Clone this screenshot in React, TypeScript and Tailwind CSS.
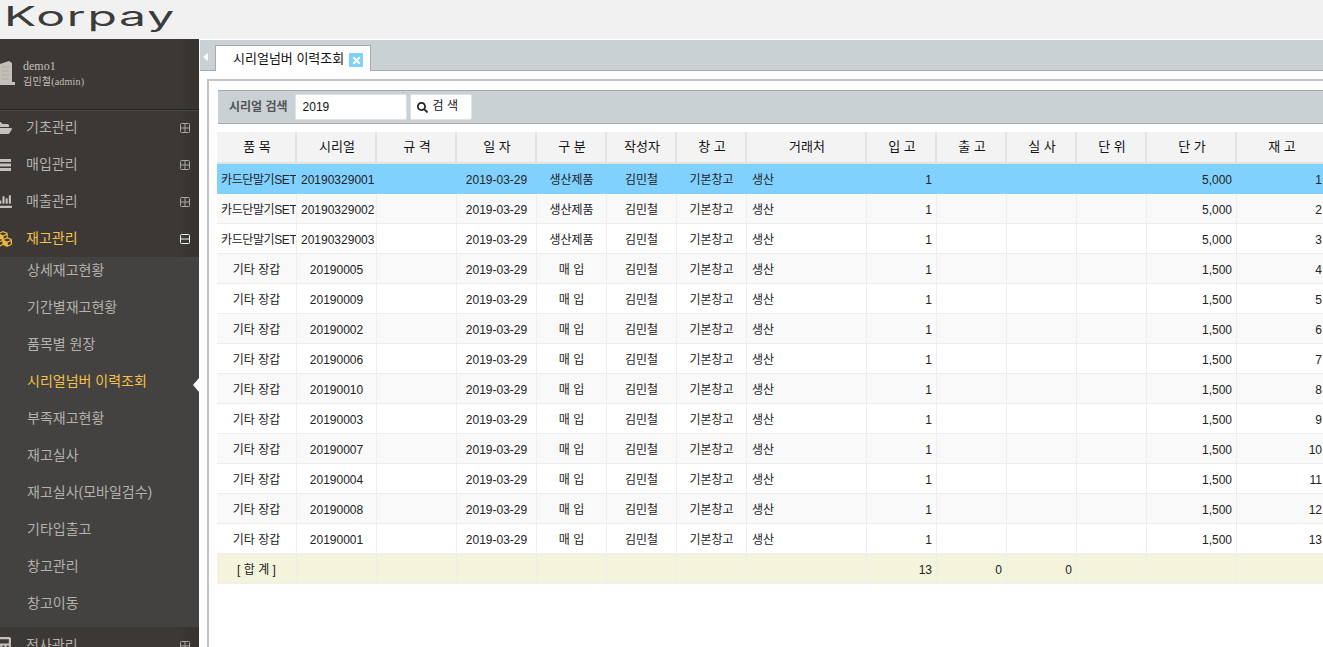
import { FaCalculator, FaChartBar, FaCubes, FaFolderOpen, FaSearch, FaTimes } from "react-icons/fa";
import { ReactNode } from "react";

const fontStack = "font-['Liberation_Sans','Noto_Sans_CJK_KR',sans-serif]";

const columns = [80, 80, 80, 80, 70, 70, 70, 120, 70, 70, 70, 70, 90, 90];
const headers = ["품 목", "시리얼", "규 격", "일 자", "구 분", "작성자", "창 고", "거래처", "입 고", "출 고", "실 사", "단 위", "단 가", "재 고"];

type Row = { name: string; serial: string; kind: string; price: string };

const rows: Row[] = [
  { name: "카드단말기SET", serial: "20190329001", kind: "생산제품", price: "5,000" },
  { name: "카드단말기SET", serial: "20190329002", kind: "생산제품", price: "5,000" },
  { name: "카드단말기SET", serial: "20190329003", kind: "생산제품", price: "5,000" },
  { name: "기타 장갑", serial: "20190005", kind: "매 입", price: "1,500" },
  { name: "기타 장갑", serial: "20190009", kind: "매 입", price: "1,500" },
  { name: "기타 장갑", serial: "20190002", kind: "매 입", price: "1,500" },
  { name: "기타 장갑", serial: "20190006", kind: "매 입", price: "1,500" },
  { name: "기타 장갑", serial: "20190010", kind: "매 입", price: "1,500" },
  { name: "기타 장갑", serial: "20190003", kind: "매 입", price: "1,500" },
  { name: "기타 장갑", serial: "20190007", kind: "매 입", price: "1,500" },
  { name: "기타 장갑", serial: "20190004", kind: "매 입", price: "1,500" },
  { name: "기타 장갑", serial: "20190008", kind: "매 입", price: "1,500" },
  { name: "기타 장갑", serial: "20190001", kind: "매 입", price: "1,500" },
];

const subMenus = ["상세재고현황", "기간별재고현황", "품목별 원장", "시리얼넘버 이력조회", "부족재고현황", "재고실사", "재고실사(모바일검수)", "기타입출고", "창고관리", "창고이동"];

const ListIcon = () => (
  <svg width="16" height="14" viewBox="0 0 16 14" fill="#c4c0bb">
    <rect x="0" y="1" width="16" height="3" />
    <rect x="4" y="5.5" width="12" height="3" />
    <rect x="0" y="10" width="16" height="3" />
  </svg>
);

const BuildingIcon = () => (
  <svg width="15" height="24" viewBox="0 0 15 24" fill="#c4c0b9" className="shrink-0">
    <path d="M0 3L9 0L12 2V21H15V24H0Z" />
    <path d="M2 6H9M2 10H9M2 14H9M2 18H9" stroke="#a5a19b" strokeWidth="0.7" />
  </svg>
);

const ToggleIcon = ({ open }: { open?: boolean }) => (
  <svg width="10" height="10" viewBox="0 0 10 10" fill="none" stroke={open ? "#f0f0f0" : "#a9a6a2"} strokeWidth="1">
    <rect x="0.5" y="0.5" width="9" height="9" rx="1" />
    <path d="M1 5h8" />
    {!open && <path d="M5 1v8" />}
  </svg>
);

const MenuItem = ({ icon, label, active }: { icon: ReactNode; label: string; active?: boolean }) => (
  <div className="h-[37px] flex items-center bg-gradient-to-r from-[#3b3836] from-90% to-[#35322f] shrink-0">
    <div className="w-[26px] -ml-[10px] mr-[10px] flex justify-center">{icon}</div>
    <span className={`text-[14px] ${active ? "text-[#f7c04a]" : "text-[#b4b1ac]"}`}>{label}</span>
    <div className="ml-auto mr-[9px] flex">
      <ToggleIcon open={active} />
    </div>
  </div>
);

const Sidebar = () => (
  <aside className="w-[199px] shrink-0 flex flex-col bg-[#3b3836] overflow-hidden">
    <div className="h-[69px] shrink-0 flex items-center gap-[8px] bg-gradient-to-r from-[#3b3836] from-90% to-[#35322f] pb-[1px]">
      <BuildingIcon />
      <div className="leading-none">
        <div className="font-['Liberation_Serif','Noto_Sans_CJK_KR',serif] text-[12px] text-[#c4c0b9] mb-[5px]">demo1</div>
        <div className="font-['Liberation_Serif','Noto_Sans_CJK_KR',serif] text-[10px] tracking-[0.2px] text-[#c4c0b9]">김민철(admin)</div>
      </div>
    </div>
    <div className="h-[1px] bg-[#242220] shrink-0 translate-y-[1px] shadow-[0_1px_0_#4a4744]" />
    <MenuItem icon={<FaFolderOpen className="text-[#c4c0bb] text-[18px]" />} label="기초관리" />
    <MenuItem icon={<ListIcon />} label="매입관리" />
    <MenuItem icon={<FaChartBar className="text-[#c4c0bb] text-[17px]" />} label="매출관리" />
    <MenuItem icon={<FaCubes className="text-[#eeb73e] text-[18px]" />} label="재고관리" active />
    <div className="bg-[#434240] shrink-0">
      {subMenus.map((menu) => {
        const current = menu === "시리얼넘버 이력조회";
        return (
          <div key={menu} className="relative h-[37px] pl-[27px] pt-[3px] text-[14px] leading-[20px]">
            <span className={current ? "text-[#f7c04a]" : "text-[#b4b1ac]"}>{menu}</span>
            {current && (
              <div className="absolute right-0 top-[10px] w-0 h-0 border-y-[7px] border-y-transparent border-r-[6px] border-r-white" />
            )}
          </div>
        );
      })}
    </div>
    <MenuItem icon={<FaCalculator className="text-[#c4c0bb] text-[17px]" />} label="전사관리" />
  </aside>
);

const Cell = ({ children, align = "center" }: { children?: ReactNode; align?: "center" | "left" | "right" }) => {
  const alignClass = align === "left" ? "text-left pl-[5px]" : align === "right" ? "text-right pr-[4px]" : "text-center px-[4px]";
  return <td className={`h-[30px] p-0 pt-[2px] border-r border-b border-[#eeeeee] whitespace-nowrap overflow-hidden ${alignClass}`}>{children}</td>;
};

const HistoryTable = () => (
  <table className="table-fixed border-separate border-spacing-0 w-[1110px] text-[12px] text-[#222]">
    <colgroup>
      {columns.map((width, index) => (
        <col key={index} style={{ width }} />
      ))}
    </colgroup>
    <thead>
      <tr className="bg-[#f3f3f3] text-[#111]">
        {headers.map((header) => (
          <th key={header} className="h-[32px] p-0 pl-[2px] text-[13px] font-normal border-r-2 border-r-[#e3e3e3] border-b-[2px] border-b-[#e3e3e3]">
            {header}
          </th>
        ))}
      </tr>
    </thead>
    <tbody>
      {rows.map((row, index) => (
        <tr key={row.serial} className={index === 0 ? "bg-[#81d1ff] [&>td]:border-[#81d1ff]" : index % 2 === 1 ? "bg-[#f9f9f9]" : "bg-white"}>
          <Cell>
            <span className={row.name.length > 6 ? "tracking-[-0.4px]" : ""}>{row.name}</span>
          </Cell>
          <Cell>{row.serial}</Cell>
          <Cell />
          <Cell>2019-03-29</Cell>
          <Cell>{row.kind}</Cell>
          <Cell>김민철</Cell>
          <Cell>기본창고</Cell>
          <Cell align="left">생산</Cell>
          <Cell align="right">1</Cell>
          <Cell />
          <Cell />
          <Cell />
          <Cell align="right">{row.price}</Cell>
          <Cell align="right">{index + 1}</Cell>
        </tr>
      ))}
      <tr className="bg-[#f4f4dc]">
        <Cell>[ 합 계 ]</Cell>
        <Cell />
        <Cell />
        <Cell />
        <Cell />
        <Cell />
        <Cell />
        <Cell />
        <Cell align="right">13</Cell>
        <Cell align="right">0</Cell>
        <Cell align="right">0</Cell>
        <Cell />
        <Cell />
        <Cell />
      </tr>
    </tbody>
  </table>
);

const App = () => {
  return (
    <div className={`w-[1323px] h-[647px] overflow-hidden flex flex-col bg-white ${fontStack}`}>
      <header className="h-[39px] shrink-0 bg-[#f1f1f1] overflow-hidden pl-[4px]">
        <div className="origin-left scale-x-[1.78] w-max whitespace-nowrap font-['Inter',sans-serif] font-normal text-[#3c3c3c] text-[27px] leading-[33px] tracking-[1px]">
          Korpay
        </div>
      </header>
      <div className="flex flex-1 min-h-0">
        <Sidebar />
        <main className="flex-1 min-w-0 flex flex-col pl-[1px] overflow-hidden">
          <div className="h-[31px] shrink-0 mt-[1px] bg-[#c9d1d4] border-b border-[#a9a9a9] flex items-end pl-[3px]">
            <div className="self-center mt-[4px] mr-[7px] w-0 h-0 border-y-[4px] border-y-transparent border-r-[5px] border-r-white" />
            <div className="h-[26px] w-[156px] -mb-[1px] bg-white border border-b-0 border-[#a9a9a9] flex items-center pl-[17px] text-[13px] text-[#111]">
              <span className="whitespace-nowrap">시리얼넘버 이력조회</span>
              <span className="ml-[5px] mt-[3px] w-[14px] h-[14px] shrink-0 bg-[#81d1ff] flex items-center justify-center text-white text-[11px]">
                <FaTimes />
              </span>
            </div>
          </div>
          <div className="flex-1 pt-[8px] pl-[7px]">
            <div className="h-full border-l-2 border-t-2 border-[#c4c4c4] pt-[9px] pl-[8px]">
              <div className="h-[34px] ml-[1px] bg-[#c9d1d4] border-y border-[#a9a9a9] flex items-center pl-[11px] w-[1200px]">
                <span className="text-[12px] font-bold text-[#555] mr-[7px]">시리얼 검색</span>
                <div className="w-[112px] h-[26px] bg-white rounded-[2px] border border-[#dfe3e5] flex items-center pl-[7px] text-[12px] text-[#111]">2019</div>
                <button className="ml-[3px] w-[62px] h-[26px] bg-white rounded-[2px] border border-[#dfe3e5] flex items-center pl-[6px] text-[12px] text-[#111]">
                  <FaSearch className="text-[11px] mr-[5px] text-[#222]" />
                  <span className="-mt-[3px]">검 색</span>
                </button>
              </div>
              <div className="mt-[8px]">
                <HistoryTable />
              </div>
            </div>
          </div>
        </main>
      </div>
    </div>
  );
};

export default App;
